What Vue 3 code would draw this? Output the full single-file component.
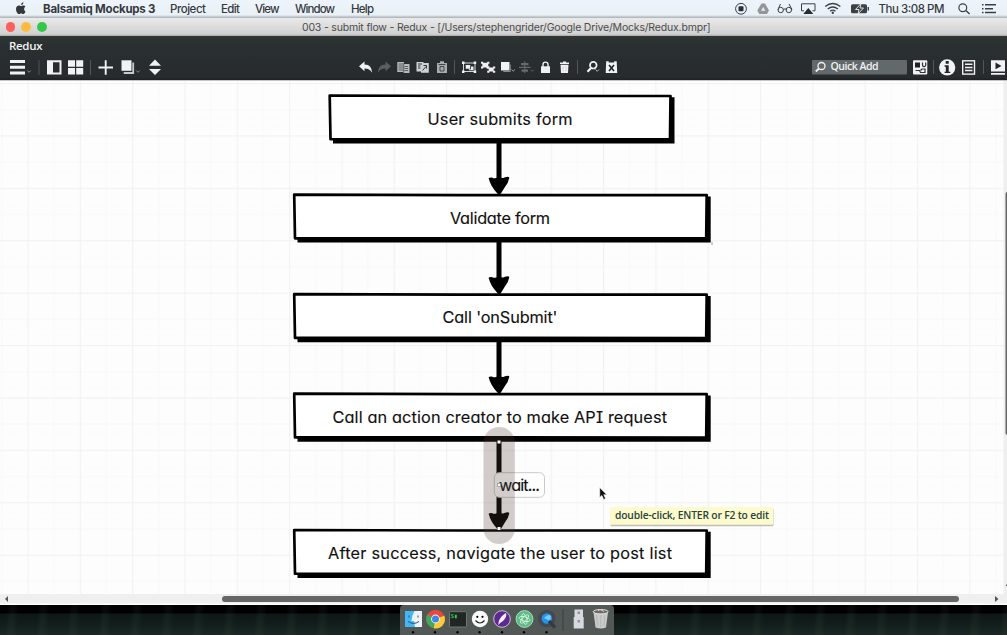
<script setup>
const menus = [
  { label: 'Balsamiq Mockups 3', width: 127.5, len: 112.5, bold: true },
  { label: 'Project', width: 50.5, len: 36 },
  { label: 'Edit', width: 34.5, len: 19 },
  { label: 'View', width: 40, len: 24.5 },
  { label: 'Window', width: 55.5, len: 40 },
  { label: 'Help', width: 30, len: 23 },
]
const boxes = [
  { x: 328.5, y: 94.3, w: 346, text: 'User submits form', tx: 427.5, len: 145 },
  { x: 293, y: 193.4, w: 417.7, text: 'Validate form', tx: 450, len: 100 },
  { x: 293, y: 293, w: 417.7, text: "Call 'onSubmit'", tx: 442.5, len: 115 },
  { x: 293, y: 392.5, w: 417.7, text: 'Call an action creator to make API request', tx: 332.5, len: 334.5 },
  { x: 293, y: 528.8, w: 417.7, text: 'After success, navigate the user to post list', tx: 328, len: 344 },
]
const arrows = [
  { from: 142, to: 194.5 },
  { from: 241, to: 294 },
  { from: 341, to: 393.5 },
  { from: 440, to: 530 },
]
const dots = [413, 435, 457.5, 479.5, 502, 524, 546.5]
</script>

<template>
  <div class="screen">
    <header class="menubar">
      <svg class="apple" width="12" height="13" viewBox="0 0 12 13">
        <path d="M8.4.3C7 .6 6 1.7 6.1 3.1 7.500 3.100 8.500 1.700 8.400.3zM10.500 9.400c-.5 1.300-1.300 2.700-2.300 2.700-.8 0-1-.5-2-.5s-1.300.5-2 .5C2.700 12.100 1 9.500 1 6.900 1 4.600 2.400 3.400 3.900 3.400c.9 0 1.600.6 2.200.6.500 0 1.400-.6 2.500-.6.7 0 1.400.4 1.900 1-1.900 1.200-1.600 4 0 5z" fill="#35383c" />
      </svg>
      <svg v-for="m in menus" :key="m.label" :width="m.width" height="18">
        <text x="0" y="12.700" :textLength="m.len" class="menu" :class="{ bold: m.bold }">{{ m.label }}</text>
      </svg>
      <svg class="status" width="274" height="18" viewBox="733 0 274 18" fill="none" stroke="#3c4045">
        <circle cx="741" cy="8.800" r="5.400" /><rect x="738.500" y="6.300" width="5" height="5" rx=".8" fill="#2c2f33" stroke="none" />
        <path d="M761.500 3.500h3.500l4 7-2 3.400h-7.700l-2-3.400z" fill="#92969a" stroke="none" /><path d="M763.200 7l2.200 3.800h-4.400z" fill="#e8eef4" stroke="none" />
        <path d="M778 9.500l2.500-5.500M792 9.500L789 4M783.500 9.500q1.500-1.400 3 0" /><circle cx="780.700" cy="10" r="2.700" /><circle cx="788.800" cy="10" r="2.700" />
        <path d="M804 10.800h-2.500V3.800h13.500v7h-2.500" /><path d="M808.300 8l5 6h-10z" fill="#282b2f" stroke="none" />
        <path d="M825.200 6.500q7.600-6 15.200 0M827.700 9q5.100-4 10.200 0M830.100 11.200q2.700-2 5.400 0" stroke-width="1.300" /><circle cx="832.800" cy="12.800" r="1.200" fill="#3c4045" stroke="none" />
        <rect x="851" y="4.200" width="16" height="9" rx="1.500" fill="#3c4045" stroke="none" /><path d="M868.300 7v3.500" stroke-width="1.400" /><path d="M861 3.500l-5.500 6h3.500l-1 4.500 5.500-6H860z" fill="#3c4045" stroke="#e9f0f6" stroke-width=".9" />
        <text x="878.500" y="12.700" textLength="66" class="menu">Thu 3:08 PM</text>
        <circle cx="962.800" cy="7.700" r="3.900" stroke-width="1.200" /><path d="M965.800 10.500l3.800 3.500" stroke-width="1.400" />
        <path d="M985 4.800h11M985 8.700h8M985 12.500h11" stroke-width="1.400" /><path d="M982 4.800h1.500M982 8.700h1.500M982 12.500h1.500" stroke-width="1.400" />
      </svg>
    </header>

    <div class="titlebar">
      <div class="lights"><i class="close"></i><i class="min"></i><i class="max"></i></div>
      <svg width="410" height="18"><text x="0" y="13.200" textLength="408.500" class="title">003 - submit flow - Redux - [/Users/stephengrider/Google Drive/Mocks/Redux.bmpr]</text></svg>
    </div>

    <div class="tools">
      <svg width="170" height="44" viewBox="0 36 170 44" fill="#f0f2f3">
        <text x="9" y="50.200" textLength="33.500" class="project">Redux</text>
        <path d="M10 60h15v3H10zM10 65.800h15v3H10zM10 71.600h15v3H10z" />
        <path d="M27.300 70.500l1.700 1.800 1.700-1.800M136.200 70.500l1.700 1.800 1.700-1.800" fill="none" stroke="#85898b" />
        <path d="M39 60v15M90.500 60v15" stroke="#505556" />
        <path d="M47 60.300h14.500v14.300H47zM53 62.300v10.300h6.500V62.300z" fill-rule="evenodd" />
        <path d="M68 60.300h7v6.500h-7zM76.200 60.300h7v6.500h-7zM68 68h7v6.600h-7zM76.200 68h7v6.600h-7z" />
        <path d="M98.500 67.500h14.500M105.700 60.300v14.400" stroke="#f0f2f3" stroke-width="1.900" />
        <path d="M121.500 60.300h10v10.500h-10z" /><path d="M133.200 62.500v10.500h-9.500" fill="none" stroke="#c5c9cb" stroke-width="1.800" />
        <path d="M155 59.500l6 6.300h-12zM149 69h12l-6 6z" />
      </svg>

      <svg width="262" height="44" viewBox="358 36 262 44" fill="#eff1f2">
        <path d="M359 66.200l5.500-4.700v2.900c5.200 0 7.400 3.400 7.500 8.300-1.600-3-3.800-4.100-7.500-4.100v2.600z" />
        <path d="M391 66.200l-5.500-4.700v2.900c-5.200 0-7.400 3.400-7.500 8.300 1.600-3 3.800-4.100 7.500-4.100v2.600z" fill="#5a5e60" />
        <path d="M397.300 62h6.700v10h-6.700zM403.500 64h6v9h-6z" fill="#b7babb" /><path d="M398.500 64h4.500M398.500 66h4.500M398.500 68h4.500M398.500 70h4.500M404.500 66.500h3.500M404.500 68.500h3.500M404.500 70.500h3.500M403.700 63v9.500" stroke="#464a4c" stroke-width=".8" />
        <path d="M416.500 62h7v9.500h-7zM421 63h7.800v9.700H421z" fill="#cfd2d3" /><path d="M418 64h4M418 66h2.500M418 68h2.500M422.500 70.500l3.500-4M423.500 65.500h3v3" stroke="#34383a" fill="none" />
        <path d="M437 63h10v10h-10zM440 61.300h4v2h-4z" fill="#a9adaf" /><path d="M440 66.500h4v4.500h-4zM438.500 64.500h7" fill="none" stroke="#424648" />
        <path d="M454.500 60v14M577.500 60v14" stroke="#505556" />
        <path d="M463.500 63h11.500v8.500h-11.500z" fill="none" stroke="#d3d6d7" /><path d="M462 61.500h2.500v2.500H462zM473.700 61.500h2.500v2.500h-2.500zM462 70.500h2.500V73H462zM473.700 70.500h2.500V73h-2.500zM465.700 65h4.500v3.800h-4.500zM471 66.500h2.500v3.800h-4.700v-1h2.200z" />
        <path d="M482.300 62.800h6v4.700h-6zM488.700 67.500h5v4h-5z" /><path d="M481 61.800h2.200v2H481zM487.200 61.800h2.200v2h-2.200zM481 66.500h2.200v2H481zM486.700 66.300h2.700v2.500h-2.700zM493 66.500h2.200v2H493zM487.200 70.700h2.200v2h-2.200zM493 70.700h2.200v2H493z" />
        <path d="M501 62h8.500v8.500H501z" /><path d="M510.300 64.500v7h-7" fill="none" stroke="#84898b" /><path d="M511.500 69.500l1.700 1.700 1.700-1.700" fill="none" stroke="#9a9ea0" />
        <path d="M521 63h7.500v2.300H521zM519 66.700h11.500v1.400H519zM521.500 69.500h6.500v2.300h-6.500zM524.200 61.300h1.100v11.700h-1.100z" fill="#65696b" /><path d="M530.700 69.700l1.600 1.600 1.600-1.600" fill="none" stroke="#585c5e" />
        <path d="M541 66.300h9v6.700h-9z" /><path d="M543 67v-2.400a2.500 2.500 0 0 1 5 0V67" fill="none" stroke="#eff1f2" stroke-width="1.400" />
        <path d="M560.500 64.800h8l-.5 8.200h-7zM560 62.500h3v-1h3v1h3v1.500h-9z" /><path d="M563 66v5.500M566 66v5.500" stroke="#c6caca" stroke-width=".6" />
        <circle cx="593.300" cy="65.200" r="3.300" fill="none" stroke="#eff1f2" stroke-width="1.700" /><path d="M591 68l-3.500 3.800" stroke="#eff1f2" stroke-width="2.200" /><path d="M595.500 69.500l1.700 1.800 1.700-1.800" fill="none" stroke="#b7babb" />
        <path d="M606.200 61.300h2.500v1.300h5.500v-1.300h2.500l.5 11.700h-11.500z" /><path d="M609 65l5 6M614 65l-5 6" stroke="#202527" stroke-width="1.600" />
      </svg>

      <svg width="197" height="44" viewBox="810 36 197 44" fill="#f0f2f3">
        <rect x="812" y="60" width="95" height="14.500" rx="1" fill="#63686a" />
        <circle cx="821.500" cy="66" r="3.500" fill="none" stroke="#f0f2f3" stroke-width="1.300" /><path d="M819 68.500l-3.200 3" stroke="#f0f2f3" stroke-width="1.900" />
        <text x="830.500" y="70.300" textLength="48" class="quick">Quick Add</text>
        <rect x="913" y="60.300" width="14.300" height="14.300" rx="1" /><path d="M915 62.500h5v5h-5z" fill="#1d2224" /><path d="M922.500 62.500v2.500a1.600 1.600 0 0 0 3.200 0v-2.500M915.500 70.500h4l1 2h4.500v-3.500h-3l-1.500 1.500" fill="none" stroke="#2e3436" stroke-width="1.200" />
        <path d="M933.500 60v14M983.500 60v14" stroke="#505556" />
        <circle cx="947.200" cy="67.400" r="8.100" /><path d="M945.700 61h3v2.800h-3zM944.600 65.300h4.100v6.400h1.600V73h-5.700v-1.300h1.200v-5h-1.200z" fill="#202527" />
        <rect x="962.700" y="60.800" width="11.800" height="13.300" fill="none" stroke="#eff1f2" stroke-width="1.400" /><path d="M965 64.200h7.500M965 67.400h7.500M965 70.600h7.500" stroke="#eff1f2" stroke-width="1.500" />
        <path d="M991 60.200h14v11.300h-14zM991 73h14v1.700h-14z" /><path d="M995.500 62.600l6 3.300-6 3.300z" fill="#202527" />
      </svg>
    </div>

    <main class="canvas">
      <svg width="1007" height="514" viewBox="0 80 1007 514">
        <defs>
          <pattern id="grid" x="27.500" y="83" width="52.320" height="52.400" patternUnits="userSpaceOnUse">
            <path d="M26.600 0v52.400M0 26.600h52.320" stroke="#f8f8f8" stroke-width="1" />
            <path d="M5 10.500h42M5 18h42M5 36h42M5 43h42" stroke="#fbfbfb" stroke-width=".8" />
            <path d="M.6 0v52.400M0 .6h52.320" stroke="#f2f2f2" stroke-width="1.200" />
          </pattern>
        </defs>
        <rect y="80" width="1007" height="514" fill="#fdfdfd" />
        <rect y="80" width="1004" height="514" fill="url(#grid)" />
        <path d="M0 80.500h1007" stroke="#c6c6c8" />

        <g v-for="b in boxes" :key="b.text">
          <path :d="`M${b.x + 4.500} ${b.y + 44}V${b.y + 49.200}H${b.x + b.w}V${b.y + 3}H${b.x + b.w - 5}z`" />
          <path :d="`M${b.x + 1.200} ${b.y + 1.200}L${b.x + b.w * .4} ${b.y + 1.700}H${b.x + b.w - 4}L${b.x + b.w - 4.500} ${b.y + 45}L${b.x + 2} ${b.y + 44.900}z`" fill="#fff" stroke="#000" stroke-width="2.700" stroke-linejoin="round" />
          <text :x="b.tx" :y="b.y + 30.200" :textLength="b.len" class="label">{{ b.text }}</text>
        </g>
        <path d="M712 242v3" stroke="#999" />

        <g v-for="a in arrows" :key="a.to">
          <path :d="`M499 ${a.from}V${a.to - 10}`" stroke="#000" stroke-width="5" />
          <path :d="`M488.300 ${a.to - 15.700}q1-1.500 4.200-1.100q1.500 1 4 0h5q2 .6 3.500-.5q4-1.100 4.300.6q-1 5.600-4.400 9.300l-4 6.500q-1.600 1.700-3.500 0q-6.900-7.500-8.600-14.800z`" />
        </g>

        <rect x="494.300" y="472.700" width="50.200" height="24.600" rx="5" fill="#fff" stroke="#c9c9c9" />
        <text x="499" y="490.800" textLength="41" class="label">wait...</text>
        <rect x="483.500" y="427" width="31.300" height="117" rx="15.600" fill="#513b35" fill-opacity=".25" />
        <path d="M497.500 440.500h3v3h-3zM497.500 527h3v3h-3z" fill="#fff" />
        <path d="M497.500 483.500h3v3h-3z" fill="#fff" stroke="#888" stroke-width=".7" />

        <rect x="610.500" y="508" width="163" height="18.300" rx="1.500" fill="#8c8c7c" opacity=".55" />
        <rect x="610" y="507" width="163.300" height="17.800" rx="1.500" fill="#fdfbce" />
        <text x="615" y="519" textLength="154" class="tip">double-click, ENTER or F2 to edit</text>
        <path d="M599.700 487.500v10l2.200-2 1.800 4 1.900-.9-1.800-3.900h3z" fill="#111" stroke="#fff" stroke-width=".6" />

        <rect x="1003.500" y="81" width="3.500" height="513" fill="#efefef" />
        <rect x="1005.500" y="192" width="5" height="243" rx="2" fill="#666" />
        <path d="M1005.500 586l1.500-2v2z" fill="#555" />
      </svg>
    </main>

    <div class="scroll">
      <svg width="8" height="10"><path d="M5 5l3-3v6z" fill="#555" /></svg>
      <div class="thumb"></div>
      <svg class="next" width="4" height="10"><path d="M0 2l3.500 3L0 8z" fill="#555" /></svg>
    </div>

    <footer class="desktop">
      <div class="dock">
        <svg width="214" height="30" viewBox="400 605 214 30">
          <path d="M405 611h17v16h-17z" fill="#45b6f4" /><path d="M414.500 611h7.500v16h-7q-.7-3-.8-6h-2.700q.5-6 3-10z" fill="#eef3f7" /><path d="M409 615.500v2M418 615.500v2M408 621.500q5.500 3.800 11 0" fill="none" stroke="#1f4f78" />
          <circle cx="435.500" cy="619" r="9.300" fill="#e8493c" /><path d="M435.500 619l-8-4.700a9.300 9.300 0 0 0 6.200 13.900z" fill="#42a85b" /><path d="M435.500 619l8.800-3.200a9.300 9.300 0 0 1-10.600 12.400z" fill="#f9cd38" /><circle cx="435.500" cy="619" r="4.400" fill="#f3f6f4" /><circle cx="435.500" cy="619" r="3.500" fill="#4286ec" />
          <rect x="449.500" y="611.700" width="17" height="15.300" rx="1" fill="#202624" stroke="#6f7774" /><text x="450.500" y="618.200" class="prompt">$▮</text>
          <circle cx="480" cy="619" r="8.200" fill="#fafafa" /><path d="M475.500 620.500q4.500 5 9 0" fill="none" stroke="#222" stroke-width="1.200" /><circle cx="477.300" cy="616.800" r="1.100" /><circle cx="482.500" cy="616.800" r="1.100" />
          <circle cx="502" cy="619" r="8.300" fill="#5e2890" stroke="#cbbfd7" /><path d="M505.800 613q1.900 3-2.800 8l-2.600 1.800-2.200 2.200.6-3.800q2-5.200 7-8.200z" fill="#f7effb" />
          <circle cx="524.500" cy="619" r="8.400" fill="#5dbb83" stroke="#a3dfb9" /><g fill="none" stroke="#ddf5e5" stroke-width=".8"><ellipse cx="524.500" cy="619" rx="5.500" ry="2.200" transform="rotate(15 524.500 619)" /><ellipse cx="524.500" cy="619" rx="5.500" ry="2.200" transform="rotate(75 524.500 619)" /><ellipse cx="524.500" cy="619" rx="5.500" ry="2.200" transform="rotate(135 524.500 619)" /></g>
          <circle cx="546.800" cy="618.500" r="7" fill="#2495ed" stroke="#43494f" stroke-width="3.600" /><path d="M544 618q4-4.500 7-2l-.6 5-3.400-1.500z" fill="#73ccfb" /><path d="M549 621l6 6.500" stroke="#343b42" stroke-width="3.500" />
          <path d="M563 609v22" stroke="#383f3e" />
          <path d="M574.500 609.500h8.500v7.500h.7v11.500h-10V617h.8z" fill="#d8dadf" /><path d="M577.500 611.500h2.500v2.500h-2.500zM577.500 620h2.500v2.500h-2.500z" fill="#8e96a2" />
          <path d="M593.500 612h14.500l-2 15.500q-5 2-10.500 0z" fill="#c9cbcb" /><path d="M596.500 615l1 11M600.800 615v12M605 615l-1 11" stroke="#afb3b2" stroke-width=".8" /><ellipse cx="600.700" cy="611.700" rx="7.500" ry="2.200" fill="#6f6965" stroke="#e1e1e1" />
          <path d="M598 611l2-1.500 4 2" stroke="#dfc5bf" fill="none" />
          <circle v-for="x in dots" :key="x" :cx="x" cy="632.200" r="1.200" />
        </svg>
      </div>
    </footer>
  </div>
</template>

<style>
body { overflow: hidden; background: #000; }
</style>
<style scoped>
.screen { width: 1007px; height: 635px; display: flex; flex-direction: column; overflow: hidden; }
svg { display: block; flex: none; }
.menubar { height: 18px; flex: none; display: flex; background: linear-gradient(#edf4fb 0, #e9f1f7 15px, #b9c1c8 17px, #aab0b5); }
.apple { margin: 2px 15.500px 0 15px; }
.status { margin-left: auto; }
.menu { font: 500 11.500px Inter, sans-serif; fill: #36393d; stroke: none; }
.menu.bold { font-weight: 700; }
.titlebar { height: 18px; flex: none; display: flex; background: linear-gradient(#e9e9e9, #d1d1d1 16px, #a5aaa9 18px); }
.titlebar > svg { margin-left: 255px; }
.title { font: 10.500px Inter, sans-serif; fill: #4b4d4e; }
.lights { display: flex; gap: 6px; padding: 4px 0 0 5.500px; width: 41.500px; }
.lights i { width: 10px; height: 10px; border-radius: 50%; }
.close { background: #fc605c; }
.min { background: #fdbc40; }
.max { background: #34c84a; }
.tools { height: 44px; flex: none; display: flex; justify-content: space-between; background: linear-gradient(#303536, #2a2f31 10px, #272b2d 41px, #1d2123); }
.tools svg:nth-child(2) { margin-left: -2px; }
.project { font: 600 11.500px "Open Sans", sans-serif; }
.quick { font: 600 10.500px "Open Sans", sans-serif; }
.canvas { height: 514px; flex: none; }
.label { font: 400 16.300px Inter, sans-serif; font-feature-settings: "cv11", "cv08"; fill: #111; stroke: #111; stroke-width: .15px; }
.tip { font: 600 10.300px "Open Sans", sans-serif; fill: #29443c; }
.scroll { height: 11px; flex: none; display: flex; align-items: flex-start; background: linear-gradient(#efefef 9px, #fff 10px); }
.thumb { width: 737px; height: 6px; border-radius: 3px; background: #666; margin: 2px 0 0 214px; }
.next { margin-left: auto; margin-right: 8.500px; }
.desktop { height: 30px; flex: none; background: repeating-linear-gradient(94deg, transparent 0 7px, rgba(70, 95, 78, .1) 11px 14px, transparent 19px 31px), linear-gradient(#000 8px, #0e1716 9px, #14201d 22px, #1c2825); }
.dock { width: 214px; height: 30px; margin-left: 400px; background: #525856; border-radius: 4px 4px 0 0; }
.prompt { font: 6px "Liberation Mono", monospace; fill: #3bd552; }
</style>
